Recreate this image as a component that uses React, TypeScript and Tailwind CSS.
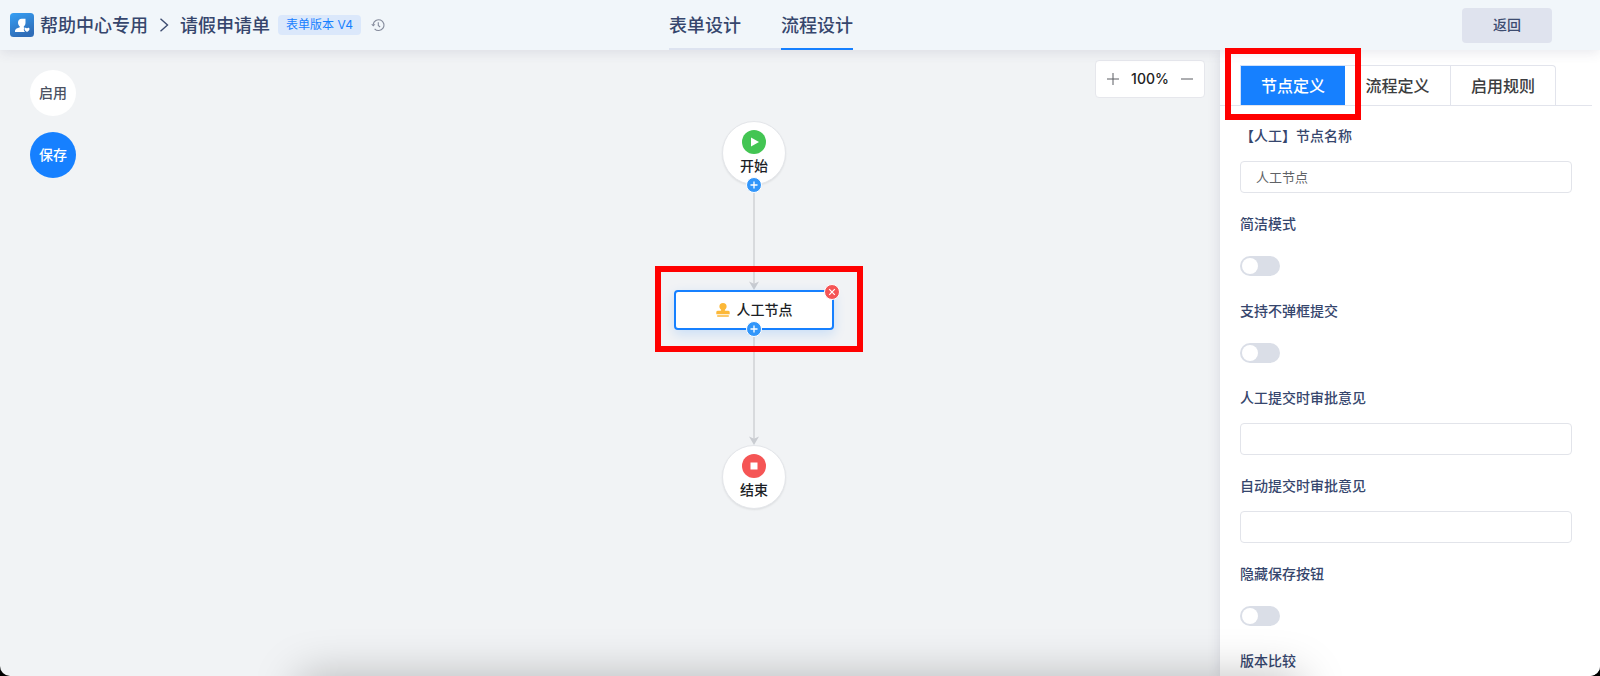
import { useState } from "react";
import type { ReactNode } from "react";

function PlusBadge({ label }: { label: string }) {
  return (
    <button
      type="button"
      aria-label={label}
      className="absolute -bottom-[9px] left-1/2 flex size-4 -translate-x-1/2 items-center justify-center rounded-full border border-white bg-[#3296fa]"
    >
      <svg viewBox="0 0 14 14" className="size-3.5 shrink-0" aria-hidden="true">
        <path d="M7 3.5v7M3.5 7h7" stroke="#fff" strokeWidth="1.3" />
      </svg>
    </button>
  );
}

function Arrow({ className }: { className: string }) {
  return (
    <div className={`flex flex-col items-center ${className}`} aria-hidden="true">
      <div className="w-0.5 flex-1 bg-[#d8dadd]" />
      <svg viewBox="0 0 10 9" className="h-[9px] w-[10px] shrink-0">
        <path d="M4 0h2v3H4z" fill="#d8dadd" />
        <path d="M0 0.4 L5 2.8 L10 0.4 L5 9 Z" fill="#c9ccd1" />
      </svg>
    </div>
  );
}

function RoundNode({ label, children, badge }: { label: string; children: ReactNode; badge?: ReactNode }) {
  return (
    <div className="relative flex size-16 flex-col items-center rounded-full border border-[#e4e6ea] bg-white pt-2 shadow-[0_1px_2px_rgba(0,0,0,0.08)]">
      {children}
      <span className="text-[14px] leading-[22px] font-medium text-[#1c1f26]">{label}</span>
      {badge}
    </div>
  );
}

function Field({ label, value }: { label: string; value: string }) {
  const [text, setText] = useState(value);
  return (
    <label className="flex h-[88px] flex-col gap-4">
      <span className="text-[14px] leading-5 font-medium text-[#36466d]">{label}</span>
      <input
        type="text"
        value={text}
        onChange={(e) => setText(e.target.value)}
        className="h-8 w-full rounded border border-[#e2e4ea] bg-white px-[15px] pb-0.5 text-[13px] text-[#606266] outline-none focus:border-[#1680ff]"
      />
    </label>
  );
}

function Toggle({ label }: { label: string }) {
  return (
    <label className="flex h-[87px] flex-col gap-[23px]">
      <span className="text-[14px] leading-5 font-medium text-[#36466d]">{label}</span>
      <input
        type="checkbox"
        role="switch"
        className="h-5 w-10 cursor-pointer appearance-none rounded-full bg-[#dadee7] p-0.5 before:block before:size-4 before:rounded-full before:bg-white before:transition-transform checked:bg-[#1680ff] checked:before:translate-x-5"
      />
    </label>
  );
}

function Header() {
  return (
    <header className="relative z-20 grid h-[50px] shrink-0 grid-cols-[1fr_auto_1fr] items-center bg-[#f1f6fa] pr-12 pl-2.5 shadow-[0_2px_12px_rgba(60,60,100,0.12)]">
      <div className="flex items-center whitespace-nowrap text-[18px] text-[#36466d]">
        <svg viewBox="0 0 24 24" className="size-6" aria-hidden="true">
          <defs>
            <linearGradient id="logo" x1="0" y1="0" x2="0.4" y2="1">
              <stop offset="0" stopColor="#36a0f5" />
              <stop offset="1" stopColor="#2f6db8" />
            </linearGradient>
          </defs>
          <rect width="24" height="24" rx="3.5" fill="url(#logo)" />
          <path d="M8 9.600C8 7.300 9.500 5.800 11.800 5.800h3.700v4c0 1.800-.7 3-1.700 3.700v.9l1 .4c-1.500 1-1.300 2.900.3 4.200H5c-.3-2.300.8-3.500 3-4.100l1.800-.6v-.8C8.700 12.700 8 11.300 8 9.600Z" fill="#fff" />
          <path d="M17 18.900c-1.600-1-2.500-1.800-2.500-2.900 0-1.500 1.800-1.800 2.500-.6.700-1.200 2.500-.9 2.500.6 0 1.100-.9 1.900-2.500 2.900Z" fill="#fff" />
        </svg>
        <span className="ml-1.5 pb-0.5 font-medium">帮助中心专用</span>
        <svg viewBox="0 0 10 14" className="mx-[11px] h-3.5 w-2.5" aria-hidden="true">
          <path d="M1.500 0.800 8.500 7l-7 6.200" fill="none" stroke="#3d4c70" strokeWidth="1.400" />
        </svg>
        <span className="pb-0.5 font-medium">请假申请单</span>
        <span className="ml-2 rounded-sm bg-[#dbe8fb] px-2 font-['Inter','Noto_Sans_CJK_SC',sans-serif] text-[12px] leading-5 text-[#1680ff]">表单版本 V4</span>
        <button type="button" aria-label="历史版本" className="ml-2.5">
          <svg viewBox="0 0 14 14" className="size-3.5" fill="none" stroke="#858b9c" strokeWidth="1.100" aria-hidden="true">
            <path d="M2.200 6.300a5.400 5.400 0 1 1 1.400 4.500M7.300 4.200v3.300l1.800 1.500" />
            <path d="M.2 6.200h4.200L2.300 8.500Z" fill="#858b9c" stroke="none" />
          </svg>
        </button>
      </div>
      <nav className="flex h-full pr-10 text-[18px] font-medium text-[#36466d]">
        <a href="#form" className="flex h-full items-center border-b-2 border-[#dde3f0] pr-10">表单设计</a>
        <a href="#flow" aria-current="page" className="flex h-full items-center border-b-2 border-[#1680ff]">流程设计</a>
      </nav>
      <div className="flex justify-end">
        <button type="button" className="h-[35px] w-[90px] rounded bg-[#dfe3ee] pb-0.5 text-[14px] font-medium text-[#3d4c70]">返回</button>
      </div>
    </header>
  );
}

function Canvas() {
  return (
    <main className="relative flex min-w-0 flex-1 justify-center pl-72">
      <div className="absolute top-5 left-[30px] flex flex-col gap-4">
        <button type="button" className="size-[46px] rounded-full bg-white pb-0.5 text-[14px] font-medium text-[#4a5162]">启用</button>
        <button type="button" className="size-[46px] rounded-full bg-[#1680ff] pb-0.5 text-[14px] font-medium text-white">保存</button>
      </div>
      <div className="absolute top-2.5 right-[15px] flex h-[38px] w-[110px] items-center justify-between rounded border border-[#e6e7ec] bg-white px-[11px]">
        <button type="button" aria-label="放大">
          <svg viewBox="0 0 12 12" className="size-3" aria-hidden="true">
            <path d="M6 0v12M0 6h12" stroke="#5a5d63" />
          </svg>
        </button>
        <span className="pb-0.5 font-['Inter','Noto_Sans_CJK_SC',sans-serif] text-[14px] font-medium text-[#222]">100%</span>
        <button type="button" aria-label="缩小">
          <svg viewBox="0 0 12 12" className="size-3" aria-hidden="true">
            <path d="M0 6h12" stroke="#5a5d63" />
          </svg>
        </button>
      </div>
      <div className="flex flex-col items-center pt-[71px]">
        <RoundNode label="开始" badge={<PlusBadge label="在开始后添加节点" />}>
          <svg viewBox="0 0 24 24" className="size-6" aria-hidden="true">
            <circle cx="12" cy="12" r="12" fill="#43c553" />
            <path d="M9 7.500 17 12l-8 4.500Z" fill="#fff" />
          </svg>
        </RoundNode>
        <Arrow className="h-[105px]" />
        <div className="relative flex h-10 w-40 items-center justify-center gap-[7px] rounded border-2 border-[#1680ff] bg-white shadow-[0_4px_12px_rgba(22,128,255,0.18)]">
          <svg viewBox="0 0 14 14" className="size-3.5" fill="#fcb838" aria-hidden="true">
            <path d="M7 0a3.600 3.600 0 0 0-3.600 3.600c0 1.500.8 2.300 1.500 3 .5.600.5 1.100-.4 1.200H1.700C.6 7.800.3 8.600.3 9.500v1.800h13.400V9.500c0-.9-.3-1.700-1.400-1.700H9.500c-.9-.1-.9-.6-.4-1.200.7-.7 1.500-1.500 1.500-3A3.600 3.600 0 0 0 7 0Z" />
            <rect x="1" y="12.300" width="12" height="1.500" rx=".7" />
          </svg>
          <span className="pb-0.5 text-[14px] font-medium text-[#1c1f26]">人工节点</span>
          <PlusBadge label="在人工节点后添加节点" />
          <button type="button" aria-label="删除人工节点" className="absolute -top-2 -right-2 flex size-4 items-center justify-center rounded-full border border-white bg-[#f55555]">
            <svg viewBox="0 0 14 14" className="size-3.5 shrink-0" aria-hidden="true">
              <path d="m4.200 4.200 5.600 5.600m0-5.600-5.600 5.600" stroke="#fff" strokeWidth="1.200" />
            </svg>
          </button>
          <div className="pointer-events-none absolute -top-[26px] -right-[31px] -bottom-6 -left-[21px] border-[6px] border-[#ff0000]" />
        </div>
        <Arrow className="h-[115px]" />
        <RoundNode label="结束">
          <svg viewBox="0 0 24 24" className="size-6" aria-hidden="true">
            <circle cx="12" cy="12" r="12" fill="#f55555" />
            <rect x="8.500" y="8.500" width="7" height="7" fill="#fff" />
          </svg>
        </RoundNode>
      </div>
    </main>
  );
}

function Sidebar() {
  return (
    <aside className="relative w-[380px] shrink-0 bg-white pt-[15px] shadow-[0_2px_12px_rgba(60,60,100,0.14)]">
      <div role="tablist" className="mr-2 flex h-[41px] border-b border-[#e2e4ec] pl-5 text-[16px] font-medium text-[#3c3d40]">
        <div className="relative">
          <button type="button" role="tab" aria-selected="true" className="h-10 w-[105px] border-t border-l border-[#cfe0fb] bg-[#1680ff] pb-0.5 text-white">节点定义</button>
          <div className="pointer-events-none absolute -top-[17px] -right-4 -bottom-[15px] -left-[15px] z-30 border-[6px] border-[#ff0000]" />
        </div>
        <button type="button" role="tab" aria-selected="false" className="h-10 w-[105px] border-t border-[#e2e4ec] pb-0.5">流程定义</button>
        <button type="button" role="tab" aria-selected="false" className="h-10 w-[106px] rounded-tr border-x border-t border-[#e2e4ec] pb-0.5">启用规则</button>
      </div>
      <form className="flex flex-col pt-[19px] pr-7 pl-5">
        <Field label="【人工】节点名称" value="人工节点" />
        <Toggle label="简洁模式" />
        <Toggle label="支持不弹框提交" />
        <Field label="人工提交时审批意见" value="" />
        <Field label="自动提交时审批意见" value="" />
        <Toggle label="隐藏保存按钮" />
        <Toggle label="版本比较" />
      </form>
    </aside>
  );
}

export default function App() {
  return (
    <div className="h-screen overflow-hidden bg-black font-['Noto_Sans_CJK_SC','Noto_Sans',sans-serif]">
      <div className="relative flex h-full flex-col overflow-hidden rounded-b-[10px] bg-[#f1f3f5]">
        <Header />
        <div className="flex min-h-0 flex-1">
          <Canvas />
          <Sidebar />
        </div>
        <div className="pointer-events-none absolute inset-x-[300px] -bottom-20 h-20 shadow-[0_0_45px_0_rgba(0,0,0,0.25)]" />
      </div>
    </div>
  );
}
